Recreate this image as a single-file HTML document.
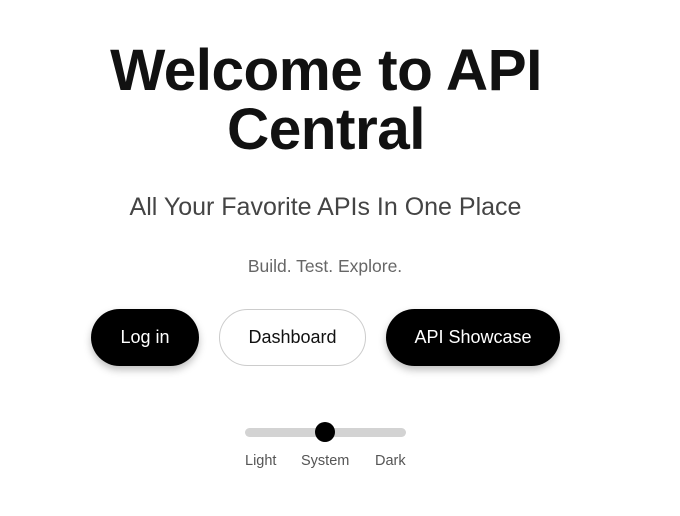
<!DOCTYPE html>
<html><head><style>
body{margin:0;width:680px;height:516px;background:#fff;font-family:"Liberation Sans",Arial,sans-serif;position:relative;overflow:hidden}
.a{position:absolute;white-space:nowrap}
h1{position:absolute;left:0;width:652px;top:41px;margin:0;text-align:center;font-size:58.5px;line-height:59px;font-weight:bold;color:#111;letter-spacing:-0.5px}
.btn{position:absolute;top:309px;height:57px;border-radius:29px;font-size:18px;display:flex;align-items:center;justify-content:center;box-sizing:border-box}
.dk{background:#000;color:#fff;box-shadow:0 4px 8px rgba(0,0,0,.25)}
.lt{background:#fff;color:#111;border:1px solid #ccc}
</style></head><body>
<h1>Welcome to API<br>Central</h1>
<div class="a" style="left:0;width:651px;text-align:center;top:193px;font-size:25px;color:#444">All Your Favorite APIs In One Place</div>
<div class="a" style="left:0;width:650px;text-align:center;top:256px;font-size:17.5px;color:#666">Build. Test. Explore.</div>
<div class="btn dk" style="left:91px;width:108px">Log in</div>
<div class="btn lt" style="left:219px;width:147px">Dashboard</div>
<div class="btn dk" style="left:386px;width:174px">API Showcase</div>
<div class="a" style="left:245px;top:428px;width:161px;height:9px;border-radius:5px;background:#d3d3d3"></div>
<div class="a" style="left:315px;top:422px;width:20px;height:20px;border-radius:50%;background:#000"></div>
<div class="a" style="left:245px;top:453px;font-size:14.5px;color:#555">Light</div>
<div class="a" style="left:301px;top:453px;font-size:14.5px;color:#555">System</div>
<div class="a" style="left:375px;top:453px;font-size:14.5px;color:#555">Dark</div>
</body></html>
